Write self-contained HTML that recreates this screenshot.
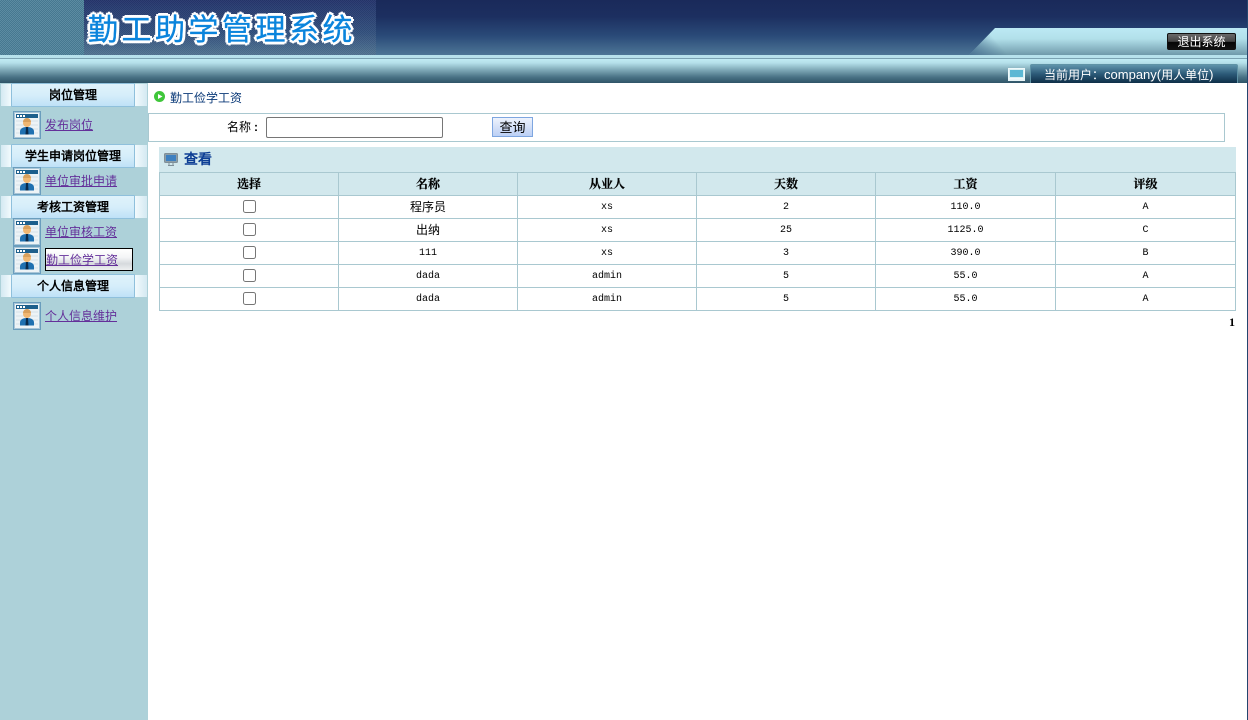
<!DOCTYPE html>
<html><head><meta charset="utf-8"><title>勤工助学管理系统</title>
<style>
html,body{margin:0;padding:0;background:#fff;width:1248px;height:720px;overflow:hidden}
body{font-family:"Liberation Sans","WenQuanYi Zen Hei",sans-serif;font-size:12px;color:#000;position:relative}
.a{position:absolute}
.dim{background:#4f8096;background-image:repeating-conic-gradient(#467890 0 25%,#5c8ca2 0 50%);background-size:2px 2px}
.logo{left:88px;top:8px;font:normal 30px/38px "WenQuanYi Zen Hei","Noto Sans CJK SC",sans-serif;-webkit-text-stroke:.3px #0a84dc;color:#0a84dc;letter-spacing:3.5px;white-space:nowrap;
text-shadow:2px 0 0 #fff,-2px 0 0 #fff,0 2px 0 #fff,0 -2px 0 #fff,2px 2px 0 #fff,-2px -2px 0 #fff,2px -2px 0 #fff,-2px 2px 0 #fff,3px 0 0 #fff,-3px 0 0 #fff,0 3px 0 #fff,0 -3px 0 #fff}
.side{left:0;top:83px;width:148px;height:637px;background:#add1d9}
.sh{left:1px;width:146px;height:22px;background:linear-gradient(#dff2fb,#d6eefa 50%,#bfe1f7)}
.sh:before{content:"";position:absolute;left:0;top:0;width:10px;height:22px;background:linear-gradient(90deg,#d4e9f2,#f2fafd)}
.sh:after{content:"";position:absolute;right:0;top:0;width:12px;height:22px;background:linear-gradient(90deg,#f2fafd,#d4e9f2)}
.sh b{position:absolute;left:10px;width:122px;top:-1px;height:22px;border:1px solid #8fc0dc;text-align:center;line-height:22px;font-size:12px;font-family:"WenQuanYi Zen Hei",sans-serif;white-space:nowrap;border-radius:1px}
.ic{left:13px;width:28px;height:28px}
.lk{left:45px;font:12px/16px "WenQuanYi Zen Hei",sans-serif;color:#64309a;text-decoration:underline;white-space:nowrap}
table{border-collapse:collapse;table-layout:fixed;position:absolute;left:159px;top:172px;width:1077px}
th{border:1px solid #a9c8d0;height:22px;padding:0;text-align:center;background:#d2e8ed;font:bold 12px/22px "Noto Serif CJK SC","WenQuanYi Zen Hei",serif;color:#000;-webkit-text-stroke:.2px #000}
td{border:1px solid #a9c8d0;height:20px;padding:2px 0 0;text-align:center;font:10px/20px "Liberation Mono",monospace}
td.c{height:21px;padding-top:1px;font:12px/21px "WenQuanYi Zen Hei",sans-serif}
td.k{height:22px;padding:0;line-height:22px}
td i{display:block;width:11px;height:11px;border:1px solid #767676;border-radius:2.5px;background:#fff;margin:0 auto;position:relative;top:-1px}
</style></head><body>

<!-- Header -->
<div class="a" style="left:0;top:0;width:1248px;height:55px;background:linear-gradient(#1a2a5a 0,#1c2f60 30%,#2a4a78 65%,#4d7696 100%)"></div>
<div class="a dim" style="left:0;top:0;width:84px;height:55px"></div>
<div class="a" style="left:84px;top:0;width:292px;height:55px;background-image:repeating-conic-gradient(rgba(255,255,255,.04) 0 25%,rgba(0,0,0,.04) 0 50%),linear-gradient(#25356c,#33517e 60%,#527592);background-size:2px 2px,100% 100%"></div>
<div class="a logo">勤工助学管理系统</div>
<svg class="a" style="left:968px;top:28px" width="280" height="27"><defs><linearGradient id="g1" x1="0" y1="0" x2="0" y2="1"><stop offset="0" stop-color="#bce9f4"/><stop offset=".4" stop-color="#b2e0ea"/><stop offset="1" stop-color="#6f9aaa"/></linearGradient><linearGradient id="g2" gradientUnits="userSpaceOnUse" x1="2" y1="27" x2="24" y2="8"><stop offset="0" stop-color="#4d7696"/><stop offset="1" stop-color="#4d7696" stop-opacity="0"/></linearGradient></defs><polygon points="1,27 27,0 280,0 280,27" fill="url(#g1)"/><polygon points="1,27 27,0 60,0 60,27" fill="url(#g2)"/></svg>
<div class="a" style="left:1167px;top:33px;width:69px;height:17px;border-radius:2px;background:linear-gradient(#6a6a6a,#444 50%,#050505 55%,#111);border:1px solid #111;box-sizing:border-box;color:#fff;text-align:center;font:12px/16px 'WenQuanYi Zen Hei',sans-serif">退出系统</div>

<!-- Strip -->
<div class="a" style="left:0;top:55px;width:1248px;height:28px;background:linear-gradient(#b7e2ec 0,#b7e2ec 3px,#7ba3b2 3px,#7ba3b2 4px,#c0ebf4 4px,#b4dfe9 8px,#7ea8b6 15px,#4a7386 22px,#2f5468 28px)"></div>
<svg class="a" style="left:1008px;top:68px" width="17" height="13"><rect x="0.5" y="0.5" width="16" height="10" fill="#d8f0f4" stroke="#eef9fb"/><rect x="2" y="2" width="13" height="7" fill="#5cb8d4"/><rect x="0" y="11" width="17" height="2" fill="#e8f5f8"/></svg>
<div class="a" style="left:1030px;top:64px;width:208px;height:19px;box-sizing:border-box;border:1px solid #5f93a6;border-bottom:0;border-radius:2px 2px 0 0;background:linear-gradient(#5f93ab,#2c5a78 50%,#0e2f48);color:#fff;font:12px/19px 'WenQuanYi Zen Hei',sans-serif;padding-left:13px;white-space:nowrap">当前用户<span style="font-family:'Noto Sans CJK SC',sans-serif">：</span><span style="font:13px/19px 'Liberation Sans',sans-serif">company(</span>用人单位<span style="font:13px/19px 'Liberation Sans',sans-serif">)</span></div>

<!-- Sidebar -->
<div class="a side"></div>
<div class="a sh" style="top:84px"><b>岗位管理</b></div>
<div class="a sh" style="top:145px"><b>学生申请岗位管理</b></div>
<div class="a sh" style="top:196px"><b>考核工资管理</b></div>
<div class="a sh" style="top:275px"><b>个人信息管理</b></div>

<svg width="0" height="0" style="position:absolute"><defs><g id="u">
<rect x=".5" y=".5" width="27" height="27" fill="#edf3f6" stroke="#6a9dbd"/><rect x="1.5" y="1.5" width="25" height="25" fill="none" stroke="#a9c6d8"/>
<rect x="3" y="3" width="22" height="4" fill="#1d5f8c"/><rect x="4" y="4" width="2" height="2" fill="#fff"/><rect x="7" y="4" width="2" height="2" fill="#fff"/><rect x="10" y="4" width="2" height="2" fill="#fff"/>
<path d="M3 10h22M3 14h22M3 18h22M3 22h22" stroke="#d5e1e8"/>
<circle cx="14" cy="12" r="4" fill="#f0b772"/><path d="M10 11a4 4 0 0 1 8 0z" fill="#d9a05c"/>
<path d="M7 23.500v-3c0-3 3-4.500 7-4.500s7 1.500 7 4.500v3z" fill="#1f70b0"/><path d="M13 16h2l.5 7.500h-3z" fill="#0a2a4a"/>
</g></defs></svg>
<svg class="a ic" style="top:111px"><use href="#u"/></svg>
<svg class="a ic" style="top:167px"><use href="#u"/></svg>
<svg class="a ic" style="top:218px"><use href="#u"/></svg>
<svg class="a ic" style="top:246px"><use href="#u"/></svg>
<svg class="a ic" style="top:302px"><use href="#u"/></svg>
<div class="a" style="left:45px;top:248px;width:88px;height:23px;box-sizing:border-box;border:1px solid #000;background:linear-gradient(#fff,#f4f5f6 40%,#d6dadd 70%,#eef0f1)"></div>
<div class="a lk" style="top:117px">发布岗位</div>
<div class="a lk" style="top:173px">单位审批申请</div>
<div class="a lk" style="top:224px">单位审核工资</div>
<div class="a lk" style="top:252px;left:46px">勤工俭学工资</div>
<div class="a lk" style="top:308px">个人信息维护</div>

<!-- Breadcrumb -->
<svg class="a" style="left:154px;top:91px" width="11" height="11"><circle cx="5.500" cy="5.500" r="5.500" fill="#3fc63a"/><polygon points="4,3 8.500,5.500 4,8" fill="#fff"/></svg>
<div class="a" style="left:170px;top:90px;font:12px/16px 'WenQuanYi Zen Hei',sans-serif;color:#0b3a78;white-space:nowrap">勤工俭学工资</div>

<!-- Search -->
<div class="a" style="left:148px;top:113px;width:1077px;height:29px;box-sizing:border-box;border:1px solid #a9c8d0"></div>
<div class="a" style="left:227px;top:119px;font:12px/16px 'WenQuanYi Zen Hei',sans-serif;white-space:nowrap">名称<span style="margin-left:3px;font-weight:bold">:</span></div>
<div class="a" style="left:266px;top:117px;width:177px;height:21px;box-sizing:border-box;border:1px solid #767676;border-radius:2px;background:#fff"></div>
<div class="a" style="left:492px;top:117px;width:41px;height:20px;box-sizing:border-box;border:1px solid #7ea6e0;background:linear-gradient(#eef3fd,#d5e1f8 50%,#bcd0f5);text-align:center;font:13px/20px 'WenQuanYi Zen Hei',sans-serif">查询</div>

<!-- Panel -->
<div class="a" style="left:159px;top:147px;width:1077px;height:25px;background:#d2e8ed"></div>
<svg class="a" style="left:164px;top:153px" width="14" height="13"><rect x=".5" y=".5" width="13" height="9" rx="1" fill="#8c9ea8" stroke="#7f8f98"/><rect x="2" y="2" width="10" height="6" fill="#3d80c0"/><path d="M4 12.500h6M5 10v2M9 10v2" stroke="#7f8f98" fill="none"/></svg>
<div class="a" style="left:184px;top:151px;font:bold 14px/16px 'WenQuanYi Zen Hei',sans-serif;color:#0c3d94;white-space:nowrap">查看</div>

<!-- Table -->
<table>
<colgroup><col style="width:179px"><col style="width:179px"><col style="width:179px"><col style="width:179px"><col style="width:180px"><col style="width:180px"></colgroup>
<tr><th>选择</th><th>名称</th><th>从业人</th><th>天数</th><th>工资</th><th>评级</th></tr>
<tr><td class="k"><i></i></td><td class="c">程序员</td><td>xs</td><td>2</td><td>110.0</td><td>A</td></tr>
<tr><td class="k"><i></i></td><td class="c">出纳</td><td>xs</td><td>25</td><td>1125.0</td><td>C</td></tr>
<tr><td class="k"><i></i></td><td>111</td><td>xs</td><td>3</td><td>390.0</td><td>B</td></tr>
<tr><td class="k"><i></i></td><td>dada</td><td>admin</td><td>5</td><td>55.0</td><td>A</td></tr>
<tr><td class="k"><i></i></td><td>dada</td><td>admin</td><td>5</td><td>55.0</td><td>A</td></tr>
</table>
<div class="a" style="left:1229px;top:314px;font:bold 12px/16px 'Liberation Serif',serif;color:#000">1</div>

<!-- Right edge -->
<div class="a" style="left:1247px;top:0;width:1px;height:720px;background:#24466e"></div>
</body></html>
